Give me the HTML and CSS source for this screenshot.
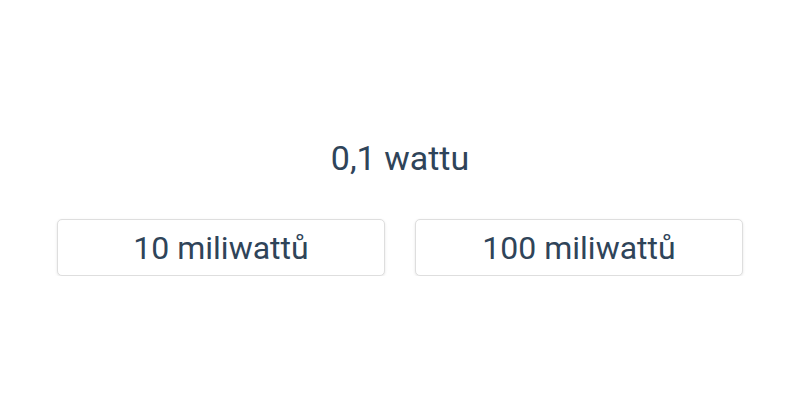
FILE: index.html
```html
<!DOCTYPE html>
<html lang="cs">
<head>
  <meta charset="UTF-8"/>
  <meta name="viewport" content="width=device-width, initial-scale=1.0"/>
  <title>Převod jednotek</title>
  <link rel="stylesheet" href="styles.css">
</head>
<body>
  <div class="quiz">
    <div class="question">0,1 wattu</div>
    <div class="answers">
      <button class="answer">10 miliwattů</button>
      <button class="answer">100 miliwattů</button>
    </div>
  </div>
</body>
</html>
```

FILE: styles.css
```css
* { box-sizing: border-box; font-family: Roboto, 'Noto Sans', sans-serif; color: #2f4459; }
body { margin: 0; background: #fff; }
.quiz { padding: 138px 57px 0; }
.question { text-align: center; font-size: 34px; line-height: 40px; }
.answers { display: flex; gap: 30px; margin-top: 41px; }
.answer { flex: 1; height: 57px; background: #fff; border: 1px solid #dedede; border-radius: 5px; box-shadow: 0 1px 3px rgba(0,0,0,0.1); font-size: 32px; cursor: pointer; padding: 0; }
```
